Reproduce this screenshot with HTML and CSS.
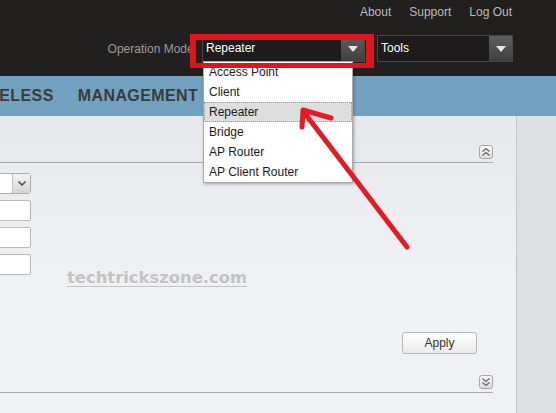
FILE: index.html
```html
<!DOCTYPE html>
<html lang="en">
<head>
<meta charset="utf-8">
<title>Operation Mode</title>
<link rel="stylesheet" href="styles.css">
</head>
<body>
<div class="page">
  <header class="topbar">
    <nav class="util-links">
      <a href="#">About</a>
      <a href="#">Support</a>
      <a href="#">Log Out</a>
    </nav>
    <div class="mode-row">
      <span class="mode-label">Operation Mode:</span>
      <div class="dd dd-mode">
        <span class="dd-value">Repeater</span>
        <span class="dd-btn"><svg width="10" height="6" viewBox="0 0 10 6"><path d="M0 0h10L5 6z" fill="#e6e6e6"/></svg></span>
        <ul class="dd-list">
          <li>Access Point</li>
          <li>Client</li>
          <li class="is-hover">Repeater</li>
          <li>Bridge</li>
          <li>AP Router</li>
          <li>AP Client Router</li>
        </ul>
        <span class="mark-box"></span>
      </div>
      <div class="dd dd-tools">
        <span class="dd-value">Tools</span>
        <span class="dd-btn"><svg width="10" height="6" viewBox="0 0 10 6"><path d="M0 0h10L5 6z" fill="#e6e6e6"/></svg></span>
      </div>
    </div>
  </header>

  <nav class="mainnav">
    <span class="nav-item nav-first">WIRELESS</span>
    <span class="nav-item">MANAGEMENT</span>
  </nav>

  <main class="body">
    <section class="panel">
      <div class="panel-head">
        <span class="toggle"><svg width="10" height="10" viewBox="0 0 10 10"><path d="M1.5 4.5L5 1.5l3.5 3M1.5 8.5L5 5.5l3.5 3" fill="none" stroke="#666" stroke-width="1.3"/></svg></span>
      </div>
      <div class="form">
        <div class="field-select"><span class="fs-btn"><svg width="8" height="5" viewBox="0 0 8 5"><path d="M0.5 0.5L4 4l3.5-3.5" fill="none" stroke="#555" stroke-width="1.6"/></svg></span></div>
        <div class="field-input"></div>
        <div class="field-input"></div>
        <div class="field-input"></div>
      </div>
      <div class="actions">
        <button class="btn" type="button">Apply</button>
      </div>
      <div class="panel-foot">
        <span class="toggle"><svg width="10" height="10" viewBox="0 0 10 10"><path d="M1.5 1.5L5 4.5l3.5-3M1.5 5.5L5 8.5l3.5-3" fill="none" stroke="#666" stroke-width="1.3"/></svg></span>
      </div>
      <a class="watermark" href="#">techtrickszone.com</a>
    </section>
    <aside class="side"></aside>
  </main>

  <svg class="pointer" width="556" height="413" viewBox="0 0 556 413">
    <path d="M407 247L303 111M331 118L303 110L302 127" fill="none" stroke="#e41b24" stroke-width="5" stroke-linecap="round" stroke-linejoin="round"/>
  </svg>
</div>
</body>
</html>
```
FILE: styles.css
```css
* { box-sizing: border-box; }

html, body {
  margin: 0;
  padding: 0;
}

body {
  font-family: "Liberation Sans", Arial, sans-serif;
  font-size: 12px;
  background: #eceef1;
  overflow: hidden;
}

.page {
  position: relative;
  width: 556px;
  height: 413px;
  overflow: hidden;
}

/* ---- dark top bar ---- */
.topbar {
  background: #221f1f;
  height: 76px;
}

.util-links {
  display: flex;
  justify-content: flex-end;
  gap: 18px;
  height: 35px;
  padding: 5px 44px 0 0;
  line-height: 14px;
}

.util-links a {
  color: #b9b9b9;
  text-decoration: none;
}

.mode-row {
  display: flex;
  justify-content: flex-end;
  align-items: center;
  height: 27px;
  padding-right: 43px;
}

.mode-label {
  color: #9a9a9a;
  margin-right: 5px;
}

.dd {
  position: relative;
  display: flex;
  height: 27px;
  border: 1px solid #474747;
  background: #1d1b1b;
}

.dd-mode { width: 163px; margin-right: 12px; }
.dd-tools { width: 136px; }

.dd-value {
  flex: 1;
  color: #fff;
  line-height: 25px;
  padding-left: 3px;
}

.dd-btn {
  width: 23px;
  display: flex;
  align-items: center;
  justify-content: center;
  background: linear-gradient(#5e5e5e, #3f3f3f);
}

.dd-list {
  position: absolute;
  left: 0;
  top: 25px;
  width: 150px;
  margin: 0;
  padding: 0;
  list-style: none;
  background: #fff;
  border: 1px solid #a9a9a9;
  box-shadow: 1px 1px 3px rgba(0, 0, 0, 0.3);
  z-index: 2;
}

.dd-list li {
  height: 20px;
  line-height: 18px;
  padding-left: 4px;
  color: #1b1b1b;
  border: 1px dotted transparent;
}

.dd-list li.is-hover {
  background: #dedede;
  border-color: #9a9a9a;
}

/* hand-drawn red highlight around the mode selector */
.mark-box {
  position: absolute;
  left: -13px;
  top: -2px;
  width: 184px;
  height: 34px;
  border: 6px solid #e3131e;
  border-right-width: 8px;
  border-bottom-width: 5px;
  z-index: 3;
}

/* ---- blue navigation bar ---- */
.mainnav {
  display: flex;
  gap: 24px;
  height: 40px;
  background: #72a1c0;
  overflow: hidden;
  white-space: nowrap;
}

.nav-item {
  font-weight: bold;
  font-size: 16px;
  letter-spacing: 0.4px;
  line-height: 40px;
  color: #3b3b3b;
}

.nav-first { margin-left: -33px; }

/* ---- content ---- */
.body {
  display: flex;
  height: 297px;
  background: linear-gradient(#e6e8ec, #f0f1f4 60%);
}

.panel {
  position: relative;
  width: 516px;
  padding-right: 23px;
}

.panel-head {
  display: flex;
  justify-content: flex-end;
  align-items: flex-end;
  height: 47px;
  padding-bottom: 3px;
  border-bottom: 1px solid #acacac;
}

.toggle {
  display: flex;
  align-items: center;
  justify-content: center;
  width: 14px;
  height: 14px;
  border: 1px solid #a8a8a8;
  border-radius: 3px;
  background: linear-gradient(#fbfbfb, #dcdcdc);
}

.form {
  display: flex;
  flex-direction: column;
  gap: 6px;
  margin-top: 10px;
}

.field-select,
.field-input {
  width: 100px;
  height: 21px;
  margin-left: -69px;
  background: #fff;
  border: 1px solid #b9b9b9;
}

.field-select {
  display: flex;
  justify-content: flex-end;
  border-radius: 3px;
  border-color: #adadad;
}

.fs-btn {
  width: 18px;
  display: flex;
  align-items: center;
  justify-content: center;
  border-left: 1px solid #c4c4c4;
  background: linear-gradient(#f4f4f4, #d6d6d6);
}

.field-input { border-radius: 2px; }

.actions {
  display: flex;
  justify-content: flex-end;
  margin-top: 57px;
  padding-right: 16px;
}

.btn {
  width: 75px;
  height: 22px;
  border: 1px solid #b7b7b7;
  border-radius: 3px;
  background: linear-gradient(#ffffff, #ebebeb);
  font-family: "Liberation Sans", Arial, sans-serif;
  font-size: 12px;
  color: #333;
  padding: 0;
}

.panel-foot {
  display: flex;
  justify-content: flex-end;
  align-items: flex-end;
  height: 39px;
  padding-bottom: 3px;
  border-bottom: 1px solid #acacac;
}

.watermark {
  position: absolute;
  left: 67px;
  top: 152px;
  font-family: "DejaVu Sans", sans-serif;
  font-weight: bold;
  font-size: 16.4px;
  color: #c3c3c3;
  text-decoration: underline;
  text-underline-offset: 3px;
}

.side {
  width: 40px;
  border-left: 1px solid #c6c6c6;
  background: #dedfe2;
}

/* red arrow drawn over the page */
.pointer {
  position: absolute;
  left: 0;
  top: 0;
  pointer-events: none;
  z-index: 5;
}
```
